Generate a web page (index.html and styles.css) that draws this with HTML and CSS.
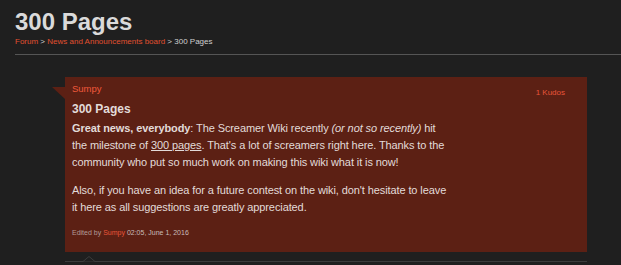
FILE: index.html
```html
<!DOCTYPE html>
<html lang="en">
<head>
    <meta charset="UTF-8">
    <title>300 Pages</title>
    <link rel="stylesheet" href="styles.css">
</head>
<body>
    <div class="page-header">
        <h1>300 Pages</h1>
        <div class="breadcrumb">
            <a href="#">Forum</a> &gt; <a href="#">News and Announcements board</a> &gt; 300 Pages
        </div>
    </div>

    <div class="thread">
        <div class="post">
            <div class="post-top">
                <a href="#" class="author">Sumpy</a>
                <span class="kudos">1 Kudos</span>
            </div>
            <h2 class="post-title">300 Pages</h2>
            <div class="post-body">
                <p><strong>Great news, everybody</strong>: The Screamer Wiki recently <em>(or not so recently)</em> hit the milestone of <u>300 pages</u>. That's a lot of screamers right here. Thanks to the community who put so much work on making this wiki what it is now!</p>
                <p>Also, if you have an idea for a future contest on the wiki, don't hesitate to leave it here as all suggestions are greatly appreciated.</p>
            </div>
            <div class="edited">Edited by <a href="#">Sumpy</a> <span class="date">02:05, June 1, 2016</span></div>
        </div>
        <div class="replies">
            <svg class="caret" width="12" height="6" viewBox="0 0 12 6">
                <polyline points="0,5.5 6,0.5 12,5.5" fill="#1f1f1f" stroke="#3c3c3c" stroke-width="1"/>
            </svg>
        </div>
    </div>
</body>
</html>
```

FILE: styles.css
```css
body {
    margin: 0;
    padding: 8px 0 0 15px;
    background-color: #1f1f1f;
    font-family: "Liberation Sans", Arial, sans-serif;
    color: #e2dbd9;
}
a {
    text-decoration: none;
}
.page-header {
    border-bottom: 1px solid #555;
    padding-bottom: 6px;
}
h1 {
    margin: 0;
    font-size: 24px;
    line-height: 28px;
    color: #dadada;
}
.breadcrumb {
    font-size: 8px;
    line-height: 12px;
    color: #cfcfcf;
}
.breadcrumb a {
    color: #e0502f;
}
.thread {
    margin: 22px 34px 0 50px;
}
.post {
    position: relative;
    background-color: #5c2014;
    padding: 6px 22px 14px 7px;
}
.post::before {
    content: "";
    position: absolute;
    left: -13px;
    top: 10px;
    border-top: 12px solid #5c2014;
    border-left: 13px solid transparent;
}
.post-top {
    display: flex;
    justify-content: space-between;
    align-items: flex-end;
    height: 12px;
}
.author {
    font-size: 9.5px;
    line-height: 12px;
    color: #f0583b;
}
.kudos {
    font-size: 8px;
    line-height: 10px;
    color: #e8553a;
    margin-bottom: -3px;
}
.post-title {
    margin: 6px 0 3px;
    font-size: 12px;
    line-height: 16px;
    color: #e2dbd9;
}
.post-body {
    font-size: 11px;
    line-height: 17px;
    letter-spacing: -0.1px;
    width: 378px;
}
.post-body p {
    margin: 0 0 11px;
}
.post-body p:last-child {
    margin-bottom: 0;
}
.edited {
    margin-top: 12px;
    font-size: 7px;
    line-height: 10px;
    color: #b39b96;
}
.edited a {
    color: #e8553a;
}
.edited .date {
    color: #c8bcb9;
}
.replies {
    position: relative;
    margin-top: 9px;
    border-top: 1px solid #3c3c3c;
}
.caret {
    position: absolute;
    left: 18px;
    top: -6px;
}
```
